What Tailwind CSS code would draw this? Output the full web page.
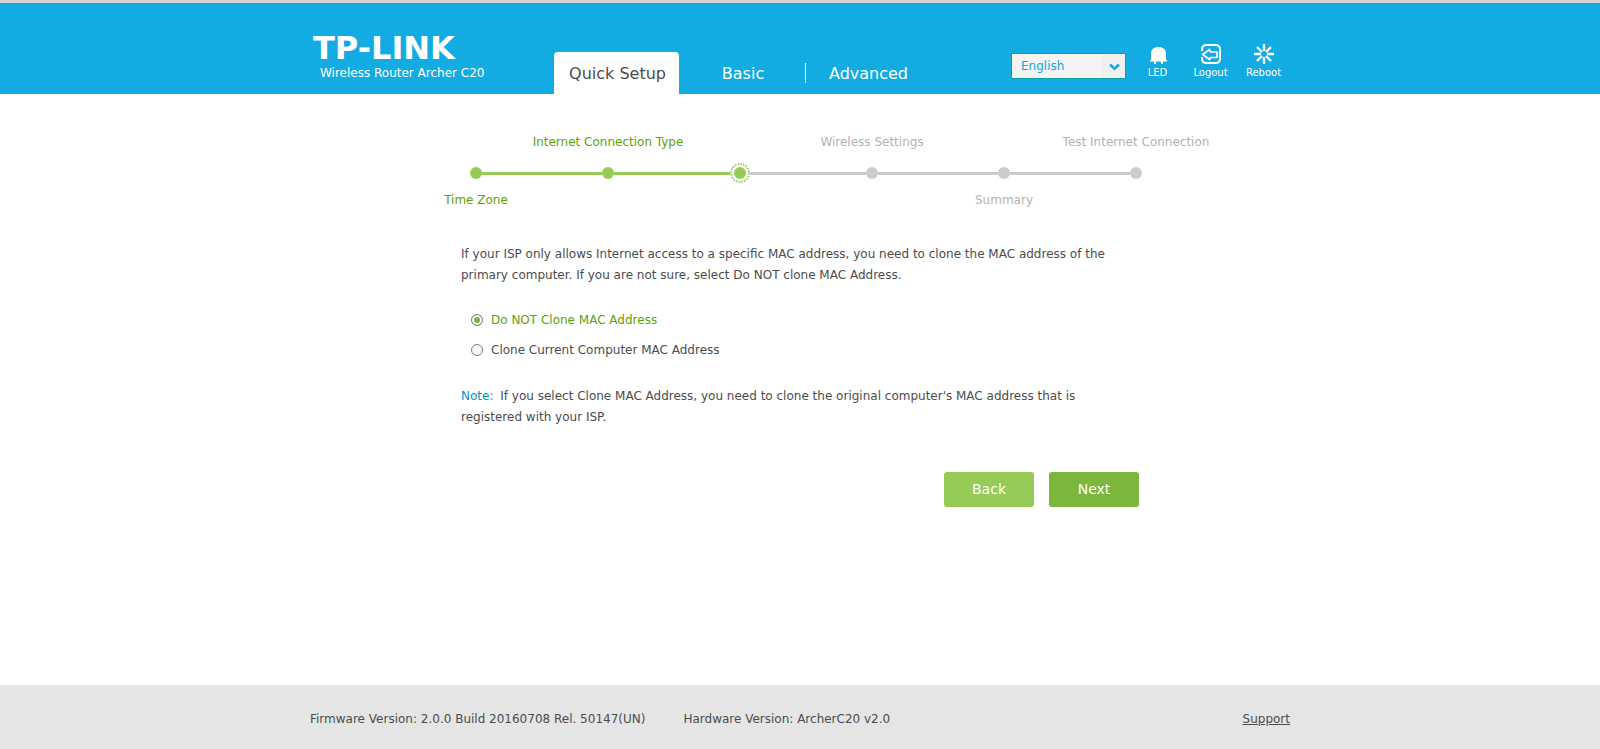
<!DOCTYPE html>
<html lang="en">
<head>
    <meta charset="UTF-8">
    <meta name="viewport" content="width=device-width, initial-scale=1.0">
    <title>Archer C20 - Quick Setup</title>
    <script src="https://cdn.jsdelivr.net/npm/@tailwindcss/browser@4"></script>
</head>
<body class="min-h-screen flex flex-col bg-white font-['DejaVu_Sans',sans-serif] text-xs text-[#4c4c4c]">

    <!-- Header -->
    <header class="bg-[#12abe2] border-t-3 border-[#d4d4d4]">
        <div class="border-t border-[#6f8790]">
            <div class="max-w-[980px] h-[90px] mx-auto flex">
                <div class="w-[244px] pt-7 text-white">
                    <div class="h-[29px] pl-[3px] text-[32px] leading-8 font-bold whitespace-nowrap">TP-LINK</div>
                    <p class="pl-[10px] leading-6 whitespace-nowrap">Wireless Router Archer C20</p>
                </div>

                <nav class="flex items-end text-base text-white">
                    <a href="#" class="w-[125px] h-[42px] pt-0.5 pl-0.5 flex items-center justify-center rounded-t bg-white text-[#4c4c4c]">Quick Setup</a>
                    <a href="#" class="w-[126px] h-[42px] pt-0.5 pl-0.5 flex items-center justify-center">Basic</a>
                    <span class="w-px h-5 mb-[11px] bg-white"></span>
                    <a href="#" class="w-[125px] h-[42px] pt-0.5 flex items-center justify-center">Advanced</a>
                </nav>

                <div class="ml-auto flex pt-10 text-white">
                    <div class="relative w-[115px] h-[26px] mt-[9px] mr-[5px]">
                        <select aria-label="Language" class="appearance-none w-full h-full pl-[9px] border border-[#0c9fae] bg-linear-to-r from-[#f4f4f4] from-80% to-[#f0f0f0] to-80% text-[#12a5dc]">
                            <option>English</option>
                        </select>
                        <svg class="absolute right-[6px] top-[10px] pointer-events-none" width="11" height="8" viewBox="0 0 11 8" fill="none" stroke="#12abe2" stroke-width="2.6"><path d="M1 1.5l4.5 4.2L10 1.5"/></svg>
                    </div>
                    <button class="w-[53px] flex flex-col items-center text-[10px] leading-[17px]">
                        <svg width="20" height="20" viewBox="0 0 20 20" fill="currentColor"><path d="M3 16V9.500C3 5.500 6 3 10.500 3S18 5.500 18 9.500V16h1v1.500h-4V20h-2v-2.500H8V20H6v-2.500H2V16z"/></svg>
                        LED
                    </button>
                    <button class="w-[53px] flex flex-col items-center text-[10px] leading-[17px]">
                        <svg width="20" height="20" viewBox="0 0 20 20" fill="none" stroke="currentColor" stroke-width="2"><path d="M1 7V5.500Q1 1 5.500 1H14.500Q19 1 19 5.500V14.500Q19 19 14.500 19H5.500Q1 19 1 14.500V13"/><path d="M1.800 10.500L8.500 5.500L9.500 8H16V13.500H9.500L8.500 15.500Z" stroke-width="1.700" stroke-linejoin="round"/></svg>
                        Logout
                    </button>
                    <button class="w-[53px] flex flex-col items-center text-[10px] leading-[17px]">
                        <svg width="20" height="20" viewBox="0 0 20 20" fill="none" stroke="currentColor" stroke-width="2.400"><path d="M10 0v7M10 13v7M0 10h7M13 10h7M3 3l5 5M12 12l5 5M17 3l-5 5M8 12l-5 5"/></svg>
                        Reboot
                    </button>
                </div>
            </div>
        </div>
    </header>

    <main class="w-full max-w-[980px] mx-auto">
        <!-- Steps -->
        <ol class="grid grid-cols-6 pl-[100px] pr-[88px] pt-[38px] text-center whitespace-nowrap leading-5 text-[#b2b2b2]">
            <li class="flex flex-col items-center text-[#5ea205]">
                <div class="h-[31px]"></div>
                <div class="w-full h-5 flex items-center">
                    <span class="flex-1"></span>
                    <span class="size-3 rounded-full bg-[#96cb58]"></span>
                    <span class="flex-1 h-[3px] bg-[#96cb58]"></span>
                </div>
                <div class="pt-[7px]">Time Zone</div>
            </li>
            <li class="flex flex-col items-center text-[#5ea205]">
                <div class="h-[31px] w-0 flex justify-center">Internet Connection Type</div>
                <div class="w-full h-5 flex items-center">
                    <span class="flex-1 h-[3px] bg-[#96cb58]"></span>
                    <span class="size-3 rounded-full bg-[#96cb58]"></span>
                    <span class="flex-1 h-[3px] bg-[#96cb58]"></span>
                </div>
            </li>
            <li class="flex flex-col items-center">
                <div class="h-[31px]"></div>
                <div class="w-full h-5 flex items-center">
                    <span class="flex-1 h-[3px] bg-[#96cb58]"></span>
                    <svg width="20" height="20" viewBox="0 0 20 20"><circle cx="10" cy="10" r="6" fill="#96cb58"/><circle cx="10" cy="10" r="9" fill="none" stroke="#96cb58" stroke-width="2" stroke-dasharray="1.500 1.327"/></svg>
                    <span class="flex-1 h-[3px] bg-[#ccc]"></span>
                </div>
            </li>
            <li class="flex flex-col items-center">
                <div class="h-[31px] w-0 flex justify-center">Wireless Settings</div>
                <div class="w-full h-5 flex items-center">
                    <span class="flex-1 h-[3px] bg-[#ccc]"></span>
                    <span class="size-3 rounded-full bg-[#ccc]"></span>
                    <span class="flex-1 h-[3px] bg-[#ccc]"></span>
                </div>
            </li>
            <li class="flex flex-col items-center">
                <div class="h-[31px]"></div>
                <div class="w-full h-5 flex items-center">
                    <span class="flex-1 h-[3px] bg-[#ccc]"></span>
                    <span class="size-3 rounded-full bg-[#ccc]"></span>
                    <span class="flex-1 h-[3px] bg-[#ccc]"></span>
                </div>
                <div class="pt-[7px]">Summary</div>
            </li>
            <li class="flex flex-col items-center">
                <div class="h-[31px] w-0 flex justify-center">Test Internet Connection</div>
                <div class="w-full h-5 flex items-center">
                    <span class="flex-1 h-[3px] bg-[#ccc]"></span>
                    <span class="size-3 rounded-full bg-[#ccc]"></span>
                    <span class="flex-1"></span>
                </div>
            </li>
        </ol>

        <!-- MAC clone form -->
        <form class="px-[151px] pt-[34px] pb-12 leading-[21px]">
            <p>If your ISP only allows Internet access to a specific MAC address, you need to clone the MAC address of the primary computer. If you are not sure, select Do NOT clone MAC Address.</p>

            <div class="pt-[19px] pb-[21px] pl-[10px]">
                <div class="h-[30px] flex items-center">
                    <input type="radio" id="cloneNone" name="mac" checked class="appearance-none size-3 rounded-full border border-[#808080] bg-[#f8f8f8] checked:bg-[#7db63d] checked:shadow-[inset_0_0_0_2px_#fff]">
                    <label for="cloneNone" class="pl-2 text-[#5ea205]">Do NOT Clone MAC Address</label>
                </div>
                <div class="h-[30px] flex items-center">
                    <input type="radio" id="cloneCurrent" name="mac" class="appearance-none size-3 rounded-full border border-[#808080] bg-[#f8f8f8] checked:bg-[#7db63d] checked:shadow-[inset_0_0_0_2px_#fff]">
                    <label for="cloneCurrent" class="pl-2">Clone Current Computer MAC Address</label>
                </div>
            </div>

            <p><span class="mr-[3px] text-[#0794c8]">Note:</span> If you select Clone MAC Address, you need to clone the original computer's MAC address that is registered with your ISP.</p>

            <div class="pt-11 flex justify-end gap-[15px] text-sm text-white">
                <button type="button" class="w-[90px] h-[35px] pb-0.5 rounded-[3px] bg-[#96cb58]">Back</button>
                <button type="button" class="w-[90px] h-[35px] pb-0.5 rounded-[3px] bg-[#7db63d]">Next</button>
            </div>
        </form>
    </main>

    <!-- Footer -->
    <footer class="mt-auto bg-[#e5e5e5]">
        <div class="max-w-[980px] mx-auto h-16 pt-1 flex items-center">
            <span>Firmware Version: 2.0.0 Build 20160708 Rel. 50147(UN)</span>
            <span class="ml-[38px]">Hardware Version: ArcherC20 v2.0</span>
            <a href="#" class="ml-auto underline">Support</a>
        </div>
    </footer>
</body>
</html>
